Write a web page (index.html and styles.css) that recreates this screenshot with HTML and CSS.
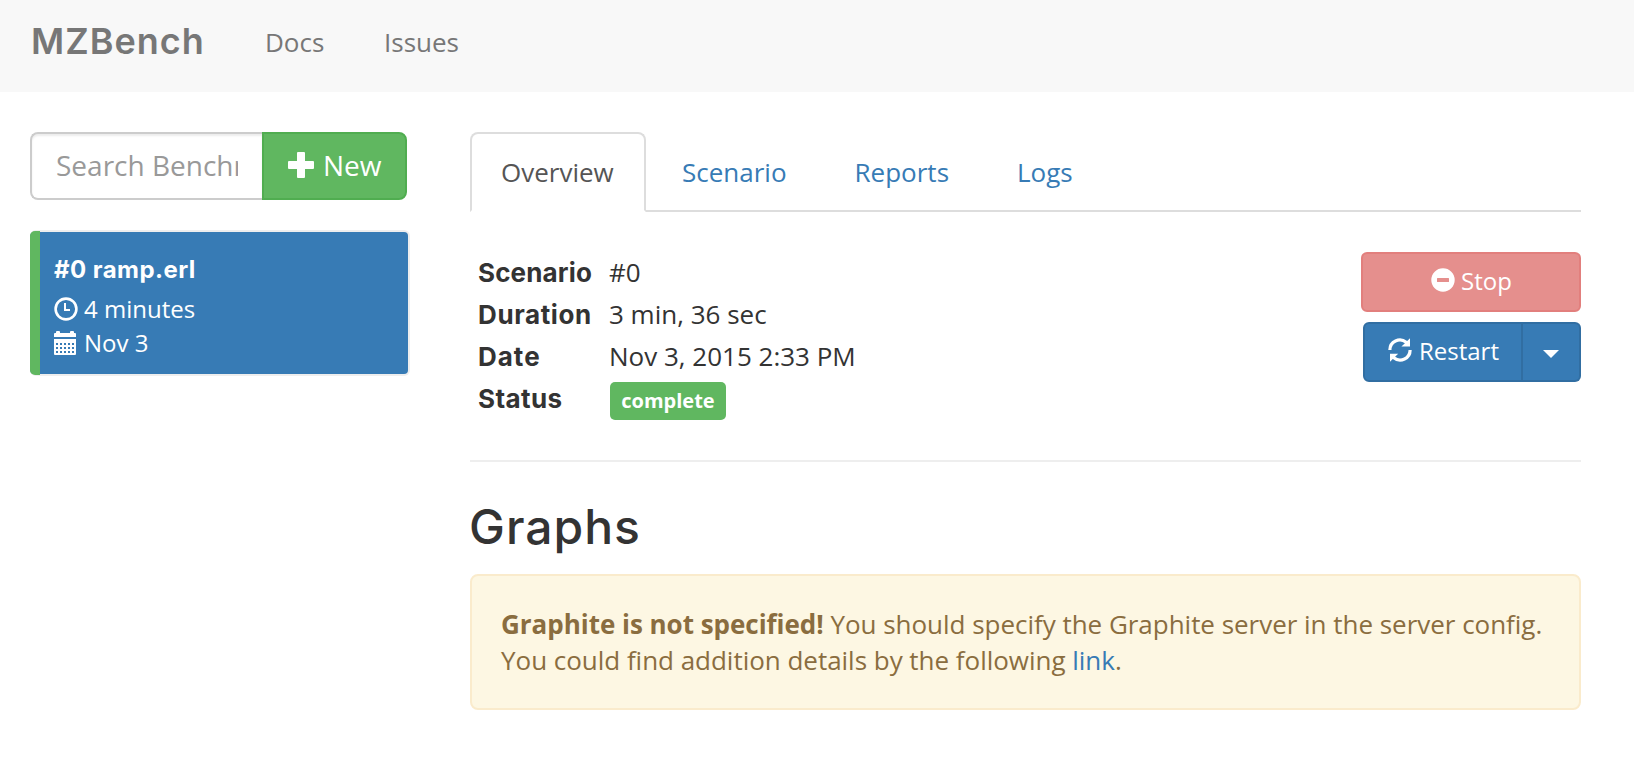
FILE: index.html
```html
<!DOCTYPE html>
<html lang="en">
<head>
<meta charset="utf-8">
<title>MZBench</title>
<link rel="stylesheet" href="styles.css">
</head>
<body>
<nav class="navbar">
  <a class="brand">MZBench</a>
  <a class="nav-link docs">Docs</a>
  <a class="nav-link">Issues</a>
</nav>
<div class="layout">
  <aside class="sidebar">
    <div class="search-group">
      <div class="search-input"><span class="placeholder">Search Benchmarks</span></div>
      <button class="btn-new">
        <svg class="icon-plus" viewBox="0 0 26 26"><path d="M10 0h6q1 0 1 1v8h8q1 0 1 1v6q0 1-1 1h-8v8q0 1-1 1h-6q-1 0-1-1v-8H1q-1 0-1-1v-6q0-1 1-1h8V1q0-1 1-1z"/></svg>
        <span>New</span>
      </button>
    </div>
    <a class="bench">
      <span class="bench-mark"></span>
      <span class="bench-body">
        <strong class="bench-name">#0 ramp.erl</strong>
        <span class="bench-row">
          <svg class="icon" viewBox="0 0 24 24"><circle cx="12" cy="12" r="10.4" fill="none" stroke="#fff" stroke-width="2.6"/><path d="M10 6h2v6h4v2h-6z"/></svg>
          <span>4 minutes</span>
        </span>
        <span class="bench-row">
          <svg class="icon" viewBox="0 0 24 24"><path fill-rule="evenodd" d="M0 6V3q0-1 1-1h1V1q0-1 1-1h2q1 0 1 1v1h10V1q0-1 1-1h2q1 0 1 1v1h1q1 0 1 1v3zM0 8h22v15q0 1-1 1H1q-1 0-1-1zM2 12v2h2v-2zM6 12v2h2v-2zM10 12v2h2v-2zM14 12v2h2v-2zM18 12v2h2v-2zM2 16v2h2v-2zM6 16v2h2v-2zM10 16v2h2v-2zM14 16v2h2v-2zM18 16v2h2v-2zM2 20v2h2v-2zM6 20v2h2v-2zM10 20v2h2v-2zM14 20v2h2v-2zM18 20v2h2v-2z"/></svg>
          <span>Nov 3</span>
        </span>
      </span>
    </a>
  </aside>
  <main class="content">
    <div class="tabs">
      <a class="tab active">Overview</a>
      <a class="tab">Scenario</a>
      <a class="tab">Reports</a>
      <a class="tab">Logs</a>
    </div>
    <section class="summary">
      <dl class="facts">
        <dt class="f-scenario">Scenario</dt><dd>#0</dd>
        <dt class="f-duration">Duration</dt><dd>3 min, 36 sec</dd>
        <dt class="f-date">Date</dt><dd>Nov 3, 2015 2:33 PM</dd>
        <dt class="f-status">Status</dt><dd><span class="label">complete</span></dd>
      </dl>
      <div class="actions">
        <button class="btn btn-stop">
          <svg class="icon" viewBox="0 0 24 24"><path fill-rule="evenodd" d="M12 .3a11.7 11.7 0 1 0 0 23.4a11.7 11.7 0 1 0 0-23.4zM6.600 10h10.800q.6 0 .6.600v2.800q0 .6-.6.600H6.600q-.6 0-.6-.600v-2.800q0-.6.600-.6z"/></svg>
          <span>Stop</span>
        </button>
        <div class="btn-group">
          <button class="btn btn-restart">
            <svg class="icon" viewBox="0 0 24 24"><path d="M.3 12A11.500 11.500 0 0 1 19.200 3L22 .2V8.600H13.400L16.900 5.200A8.400 8.400 0 0 0 3.500 12z"/><path d="M23.700 12A11.500 11.500 0 0 1 4.800 21L2 23.800V15.800H10.200L7.100 18.800A8.400 8.400 0 0 0 20.500 12z"/></svg>
            <span>Restart</span>
          </button>
          <button class="btn btn-caret"><svg class="caret" viewBox="0 0 16 8"><path d="M0 0h16L8 8z"/></svg></button>
        </div>
      </div>
    </section>
    <h2 class="heading">Graphs</h2>
    <div class="alert"><strong>Graphite is not specified!</strong> You should specify the Graphite server in the server config.<br>You could find addition details by the following <a class="link">link</a>.</div>
  </main>
</div>
</body>
</html>
```

FILE: styles.css
```css
* { box-sizing: border-box; }
body {
  margin: 0;
  background: #fff;
  color: #333;
  font: 26px/37px "Open Sans", sans-serif;
}
svg { display: block; flex: none; fill: #fff; }
button { font-family: inherit; margin: 0; padding: 0; color: #fff; }
.navbar {
  display: flex;
  height: 92px;
  padding: 23px 31px 0;
  background: #f8f8f8;
  color: #777;
}
.brand {
  width: 234px;
  font: 600 36px/36px Inter, sans-serif;
  letter-spacing: 1px;
}
.nav-link { line-height: 39px; }
.docs { width: 119px; }
.layout { display: flex; padding: 40px 53px 0 30px; }
.sidebar { width: 380px; margin-right: 60px; }
.search-group { display: flex; width: 377px; height: 68px; }
.search-input {
  flex: 1;
  min-width: 0;
  padding: 11px 24px;
  border: 2px solid #ccc;
  border-right: 0;
  border-radius: 8px 0 0 8px;
  box-shadow: inset 0 2px 2px rgba(0, 0, 0, .075);
  color: #999;
  font-size: 28px;
  line-height: 40px;
}
.placeholder { display: block; overflow: hidden; white-space: nowrap; }
.btn-new {
  display: flex;
  flex: none;
  width: 145px;
  padding: 11px 0 0 24px;
  gap: 9px;
  border: 2px solid #50ad50;
  border-radius: 0 8px 8px 0;
  background: #60b760;
  font-size: 28px;
  line-height: 40px;
}
.icon-plus { width: 26px; height: 26px; margin-top: 7px; }
.icon { width: 24px; height: 24px; }
.bench {
  display: flex;
  height: 146px;
  margin-top: 30px;
  border: 2px solid #eee;
  border-left: 0;
  border-radius: 6px;
  background: #377bb5;
  color: #fff;
  font-size: 24px;
  line-height: 34px;
}
.bench-mark { width: 10px; margin: -1px 0; border-radius: 5px 0 0 5px; background: #60b760; }
.bench-body { display: flex; flex-direction: column; padding: 20px 0 0 14px; }
.bench-name { height: 40px; font: 700 24px/36px Inter, sans-serif; letter-spacing: .45px; }
.bench-row { display: flex; height: 34px; gap: 6px; align-items: center; }
.content { flex: 1; }
.tabs { display: flex; height: 80px; gap: 4px; border-bottom: 2px solid #ddd; }
.tab {
  height: 80px;
  padding: 20px 30px 0;
  border: 2px solid transparent;
  color: #377bb5;
}
.tab.active {
  width: 176px;
  padding: 20px 0 0 29px;
  border-color: #ddd;
  border-bottom-color: #fff;
  border-radius: 8px 8px 0 0;
  background: #fff;
  color: #555;
}
.summary {
  display: flex;
  justify-content: space-between;
  height: 250px;
  padding-top: 40px;
  border-bottom: 2px solid #eee;
}
.facts {
  display: grid;
  grid-template-columns: 131px auto;
  grid-auto-rows: 42px;
  margin: 0 0 0 8px;
  line-height: 40px;
}
.facts dt { font: 700 26px/42px Inter, sans-serif; white-space: nowrap; }
.facts .f-scenario { letter-spacing: .15px; }
.facts .f-duration { letter-spacing: .6px; }
.facts .f-date { letter-spacing: 1px; }
.facts .f-status { letter-spacing: .4px; }
.facts dd { margin: 0; }
.label {
  display: block;
  width: 116px;
  height: 38px;
  margin: 4px 0 0 1px;
  border-radius: 5px;
  background: #60b760;
  color: #fff;
  font-size: 20px;
  font-weight: 700;
  line-height: 37px;
  text-align: center;
}
.actions { display: flex; flex-direction: column; align-items: flex-end; gap: 10px; }
.btn {
  display: flex;
  height: 60px;
  gap: 6px;
  border: 2px solid;
  border-radius: 6px;
  font-size: 24px;
  line-height: 34px;
}
.btn .icon { margin-top: 4px; }
.btn-stop { width: 220px; padding: 10px 0 0 68px; border-color: #e27f7d; background: #e58f8d; }
.btn-group { display: flex; }
.btn-restart {
  width: 160px;
  padding: 10px 0 0 23px;
  gap: 7px;
  border-color: #316ea2;
  border-radius: 6px 0 0 6px;
  background: #377bb5;
}
.btn-caret {
  width: 58px;
  padding: 26px 0 0 20px;
  border-color: #316ea2;
  border-left: 0;
  border-radius: 0 6px 6px 0;
  background: #377bb5;
}
.caret { width: 16px; height: 8px; }
.heading { margin: 38px 0 20px -1px; font: 500 48px/54px Inter, sans-serif; letter-spacing: 1px; }
.alert {
  height: 136px;
  padding: 30px 29px;
  border: 2px solid #faebcc;
  border-radius: 8px;
  background: #fdf7e3;
  color: #8a6d3f;
  line-height: 36px;
  letter-spacing: -.025px;
  white-space: nowrap;
}
.link { color: #377bb5; }
```
